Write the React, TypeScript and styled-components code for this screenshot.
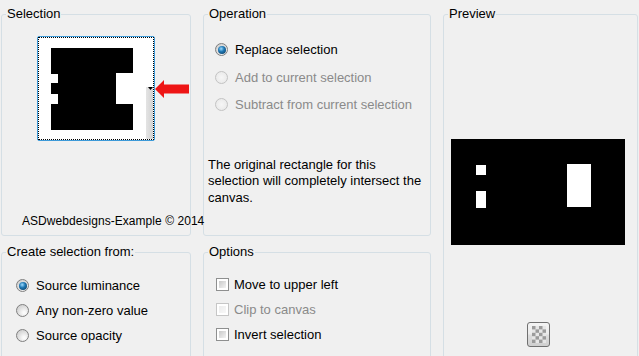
import React from 'react';
import styled, { createGlobalStyle } from 'styled-components';

const GlobalStyle = createGlobalStyle`
  html, body {
    margin: 0;
    padding: 0;
    background: #f0f0f0;
  }
  body {
    font-family: "Liberation Sans", Arial, sans-serif;
    font-size: 13px;
    color: #000;
  }
`;

const Dialog = styled.div`
  width: 639px;
  height: 356px;
  overflow: hidden;
  box-sizing: border-box;
  padding: 7px 0 0 1px;
  display: grid;
  grid-template-columns: 190px 228px 195px;
  grid-template-rows: 229px 130px;
  column-gap: 12px;
  row-gap: 9px;
`;

const Group = styled.fieldset<{ $area: string }>`
  position: relative;
  margin: 0;
  padding: 0;
  min-width: 0;
  border: 1px solid #d5dfe5;
  border-radius: 3px;
  display: flex;
  flex-direction: column;
  align-items: flex-start;
  grid-area: ${p => p.$area};
`;

const Legend = styled.legend`
  margin-left: 4px;
  padding: 0 1px;
  line-height: 14px;
  font-size: 13px;
`;

const Thumb = styled.div`
  position: relative;
  margin: 15px 0 0 35px;
  width: 116px;
  height: 103px;
  border: 1px solid #3d9ad8;
  border-radius: 2px;
  background: #fff;
`;

const ThumbInner = styled.div`
  width: 100%;
  height: 100%;
  outline: 1px dotted #000;
  outline-offset: -1px;
`;

const Arrow = styled.svg`
  position: absolute;
  left: 117px;
  top: 43px;
`;

const Credit = styled.div`
  margin: 73px 0 0 20px;
  font-size: 12px;
  line-height: 14px;
  letter-spacing: 0.05px;
  white-space: nowrap;
  position: relative;
  z-index: 1;
`;

const RadioList = styled.div<{ $top: number; $left: number; $row: number }>`
  margin: ${p => p.$top}px 0 0 ${p => p.$left}px;
  display: grid;
  grid-auto-rows: ${p => p.$row}px;
`;

const Row = styled.label<{ $disabled?: boolean; $gap: number }>`
  display: flex;
  align-items: center;
  gap: ${p => p.$gap}px;
  color: ${p => (p.$disabled ? '#8a8a8a' : '#000')};
  white-space: nowrap;
`;

const Radio = styled.span<{ $checked?: boolean; $disabled?: boolean }>`
  position: relative;
  width: 11px;
  height: 11px;
  flex: none;
  border-radius: 50%;
  border: 1px solid ${p => (p.$disabled ? '#c3c3c3' : '#7f7f7f')};
  background: ${p =>
    p.$disabled
      ? 'radial-gradient(circle at 50% 50%, #f6f6f6, #e6e6e6)'
      : 'radial-gradient(circle at 65% 70%, #fbfbfb 10%, #dedede 55%, #c4c4c4)'};
  &::after {
    content: '';
    display: ${p => (p.$checked ? 'block' : 'none')};
    position: absolute;
    left: 1.5px;
    top: 1.5px;
    width: 8px;
    height: 8px;
    border-radius: 50%;
    background: radial-gradient(circle at 40% 35%, #9fdcff 0%, #1f78b4 40%, #0a3354 100%);
  }
`;

const Check = styled.span<{ $disabled?: boolean }>`
  width: 13px;
  height: 13px;
  flex: none;
  box-sizing: border-box;
  border: 1px solid ${p => (p.$disabled ? '#c6c6c6' : '#8e8f8f')};
  background: #fff;
  padding: 2px;
  &::after {
    content: '';
    display: block;
    width: 100%;
    height: 100%;
    background: ${p =>
      p.$disabled
        ? 'linear-gradient(135deg, #ececec, #f8f8f8)'
        : 'linear-gradient(135deg, #c9c9c9, #f3f3f3)'};
  }
`;

const Note = styled.p`
  margin: 38px 0 0 4px;
  width: 222px;
  line-height: 16.5px;
`;

const PreviewImage = styled.svg`
  margin: 118px 0 0 7px;
  display: block;
`;

const ZoomButton = styled.button`
  margin: 77px 0 0 83px;
  width: 23px;
  height: 25px;
  padding: 0;
  border: 1px solid #707070;
  border-radius: 3px;
  background: linear-gradient(#f3f3f3, #ebebeb 48%, #dddddd 52%, #cfcfcf);
  display: flex;
  align-items: center;
  justify-content: center;
`;

const operations = [
  { label: 'Replace selection', checked: true },
  { label: 'Add to current selection', disabled: true },
  { label: 'Subtract from current selection', disabled: true }
];

const sources = [
  { label: 'Source luminance', checked: true },
  { label: 'Any non-zero value' },
  { label: 'Source opacity' }
];

const options = [
  { label: 'Move to upper left' },
  { label: 'Clip to canvas', disabled: true },
  { label: 'Invert selection' }
];

const checker = () => {
  const cells = [];
  for (let r = 0; r < 5; r++) {
    for (let c = 0; c < 4; c++) {
      if ((r + c) % 2 === 0) {
        cells.push(<rect key={`${r}-${c}`} x={c * 3.5} y={r * 3.4} width={3.5} height={3.4} fill="#9b9b9b" />);
      }
    }
  }
  return cells;
};

export default function App() {
  return (
    <>
      <GlobalStyle />
      <Dialog>
        <Group $area="1 / 1 / 2 / 2">
          <Legend>Selection</Legend>
          <Thumb>
            <ThumbInner>
              <svg width="116" height="103" viewBox="0 0 116 103">
                <rect x="13" y="11" width="82" height="82" fill="#000" />
                <rect x="13" y="37" width="7" height="9" fill="#fff" />
                <rect x="13" y="57" width="7" height="10" fill="#fff" />
                <rect x="78" y="36" width="17" height="31" fill="#fff" />
                <defs>
                  <linearGradient id="strip" x1="0" x2="1">
                    <stop offset="0" stopColor="#e4e4e4" />
                    <stop offset="1" stopColor="#d2d2d2" />
                  </linearGradient>
                </defs>
                <rect x="108" y="50" width="7" height="52" fill="url(#strip)" />
                <polygon points="110,50 115,50 112.5,53" fill="#000" />
              </svg>
            </ThumbInner>
            <Arrow width="34" height="18" viewBox="0 0 34 18">
              <polygon points="0,9 9,0 9,4.5 34,4.5 34,13.5 9,13.5 9,18" fill="#ee1515" />
            </Arrow>
          </Thumb>
          <Credit>ASDwebdesigns-Example © 2014</Credit>
        </Group>

        <Group $area="1 / 2 / 2 / 3">
          <Legend>Operation</Legend>
          <RadioList $top={15} $left={11} $row={27.5}>
            {operations.map(o => (
              <Row key={o.label} $disabled={o.disabled} $gap={7}>
                <Radio $checked={o.checked} $disabled={o.disabled} />
                {o.label}
              </Row>
            ))}
          </RadioList>
          <Note>
            The original rectangle for this selection will completely intersect the canvas.
          </Note>
        </Group>

        <Group $area="1 / 3 / 3 / 4">
          <Legend>Preview</Legend>
          <PreviewImage width="174" height="106" viewBox="0 0 174 106">
            <rect width="174" height="106" fill="#000" />
            <rect x="25" y="26" width="10" height="10" fill="#fff" />
            <rect x="25" y="52" width="10" height="17" fill="#fff" />
            <rect x="116" y="25" width="24" height="43" fill="#fff" />
          </PreviewImage>
          <ZoomButton>
            <svg width="14" height="17" viewBox="0 0 14 17">
              <rect width="14" height="17" fill="#e6e6e6" />
              {checker()}
            </svg>
          </ZoomButton>
        </Group>

        <Group $area="2 / 1 / 3 / 2">
          <Legend>Create selection from:</Legend>
          <RadioList $top={14} $left={14} $row={25}>
            {sources.map(o => (
              <Row key={o.label} $gap={7}>
                <Radio $checked={o.checked} />
                {o.label}
              </Row>
            ))}
          </RadioList>
        </Group>

        <Group $area="2 / 2 / 3 / 3">
          <Legend>Options</Legend>
          <RadioList $top={13} $left={12} $row={25}>
            {options.map(o => (
              <Row key={o.label} $disabled={o.disabled} $gap={5}>
                <Check $disabled={o.disabled} />
                {o.label}
              </Row>
            ))}
          </RadioList>
        </Group>
      </Dialog>
    </>
  );
}
